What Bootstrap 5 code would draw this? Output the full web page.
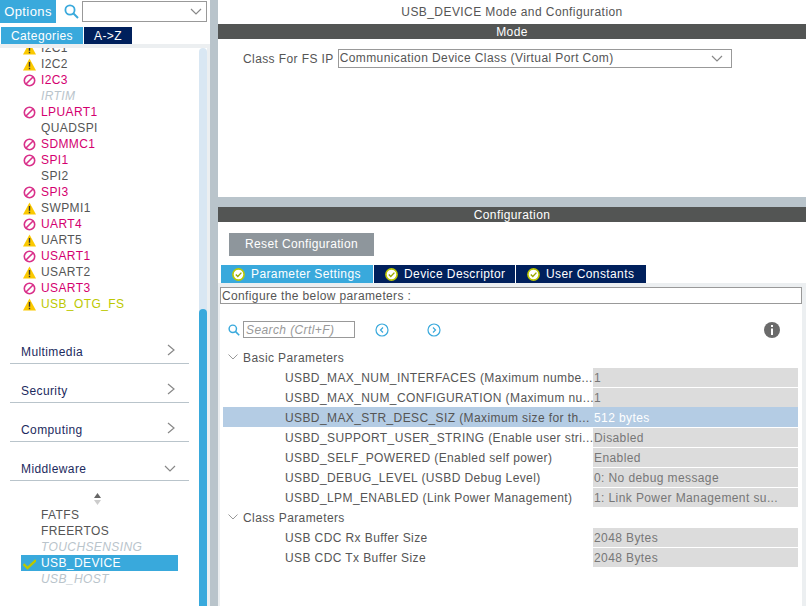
<!DOCTYPE html>
<html lang="en"><head><meta charset="utf-8"><title>USB_DEVICE Mode and Configuration</title>
<link href="https://cdn.jsdelivr.net/npm/bootstrap@5.3.0/dist/css/bootstrap.min.css" rel="stylesheet">
<style>
html,body{height:606px;overflow:hidden}
body{font:12px/16px "Liberation Sans",Arial,sans-serif;letter-spacing:.4px;color:#555;background:#b9c4cb}
.shell{width:806px;height:606px}
.side{width:210px;background:#fff}
.split{width:8px}
.main{width:588px}
.sidetop{height:44px}
.opt{width:56px;height:23px;background:#39a9dc;color:#fff;font-size:13px;line-height:24px;text-align:center}
.findbox{width:125px;height:21px;border:1px solid #999;margin-left:3px;margin-top:1px}
.tabrow{padding:4px 0 0 1px;height:21px}
.cat{width:82px;height:17px;background:#39a9dc;color:#fff;line-height:18px;text-align:center}
.az{width:48px;height:17px;background:#00205c;color:#fff;line-height:18px;text-align:center;margin-left:1px}
.sidebody{height:562px}
.sideleft{width:199px}
.listclip{height:264px;overflow:hidden}
.listin{margin-top:-8px}
.prow{height:16px;padding-left:23px;gap:5px;white-space:nowrap}
.prow svg,.ic-blank{width:13px;height:13px;flex:none}
.tm{color:#d4006f}.to{color:#bcc800}.td{color:#b9c4cb;font-style:italic}
.sect{height:39px;margin:0 10px 0 10px;border-bottom:1px solid #b9c4cb;color:#1c2a5e;padding:0 11px 3px;width:179px}
.sect svg{margin-right:2px}
.sorter{height:17px;margin-top:9px;padding-left:93px}
.sel{background:#39a9dc;color:#fff;width:157px;margin-left:21px;padding-left:2px}
.sbar{width:8px;background:#d9e7f3;border-radius:4px 4px 0 0;height:558px}
.sthumb{height:297px;background:#39a9dc;border-radius:4px 4px 0 0}
.sgut{width:3px;background:#eceff1}
.pane{background:#fff;height:197px}
.pane2{background:#fff;height:399px;margin-top:10px}
.ttl{height:24px;line-height:24px;text-align:center;letter-spacing:.42px}
.band{height:15px;background:#535554;color:#fff;line-height:16px;text-align:center}
.formrow{padding:10px 0 0 25px;gap:4px}
.combo{width:394px;height:19px;border:1px solid #999;padding-left:1px;line-height:17px}
.rst{background:#8e969c;color:#fff;border:0;border-radius:0;width:145px;height:23px;padding:0;margin:11px 0 0 11px;font:12px/23px "Liberation Sans",sans-serif;letter-spacing:.36px}
.tabs{margin:9px 0 0 3px;height:18px;gap:1px}
.tb{height:18px;line-height:19px;color:#fff;background:#00205c;gap:6px;padding-left:11px}
.tb1{width:152px;background:#39a9dc}.tb2{width:141px}.tb3{width:130px}
.tabbody{background:#eceff1;padding:4px 4px 0 2px}
.cfg{height:17px;border:1px solid #999;background:#fff;line-height:16px;padding-left:1px;letter-spacing:.37px}
.workarea{background:#fff;height:302px}
.tools{height:43px;padding:8px 0 0 8px}
.srch{width:112px;height:17px;border:1px solid #999;margin-left:3px;color:#999;font-style:italic;line-height:16px;padding-left:2px}
.circ1{margin-left:20px}.circ2{margin-left:38px}.inf{margin-left:323px}
.grp{height:20px;padding-left:5px;gap:5px;margin-left:3px}
.grp span{padding-top:1px}
.ln{height:20px;margin:0 4px 0 3px;padding-left:62px;white-space:nowrap}
.ln.pick{background:#b4cce4}
.nm{width:308px;flex:none;overflow:hidden;padding-top:1px}
.vl{width:205px;flex:none;height:19px;background:#dcdcdc;color:#777;line-height:20px;padding-left:1px;overflow:hidden}
.pick .vl{background:#b4cce4;color:#fff}
</style></head><body>
<svg width="0" height="0" class="d-none" aria-hidden="true"><defs>
<symbol id="warn" viewBox="0 0 13 13"><path d="M6.5.4 13 12.6H0Z" fill="#fbc900"/><path d="M5.8 4h1.4v4.8H5.8ZM5.8 9.8h1.4v1.4H5.8Z" fill="#333"/></symbol>
<symbol id="stop" viewBox="0 0 13 13"><circle cx="6.5" cy="6.5" r="5.2" fill="none" stroke="#d9308a" stroke-width="1.6"/><path d="M3 10 10 3" stroke="#d9308a" stroke-width="1.6"/></symbol>
<symbol id="lens" viewBox="0 0 15 15"><circle cx="6" cy="6" r="4.6" fill="none" stroke="#39a9dc" stroke-width="1.8"/><path d="M9.5 9.5 14 14" stroke="#39a9dc" stroke-width="2"/></symbol>
<symbol id="okc" viewBox="0 0 13 13"><circle cx="6.5" cy="6.5" r="5.6" fill="#fff" stroke="#bcc800" stroke-width="1.6"/><path d="M3.8 6.5 5.8 8.5 9.4 4.6" fill="none" stroke="#9aa800" stroke-width="1.4"/></symbol>
</defs></svg>
<div class="shell d-flex">
 <aside class="side d-flex flex-column">
  <div class="sidetop">
   <div class="d-flex align-items-start">
    <div class="opt">Options</div>
    <svg class="ms-2 mt-1" width="15" height="15"><use href="#lens"/></svg>
    <div class="findbox d-flex justify-content-end align-items-center pe-1"><svg width="12" height="7" viewBox="0 0 12 7"><path d="M1 1 6 6 11 1" fill="none" stroke="#888" stroke-width="1.2"/></svg></div>
   </div>
   <div class="tabrow d-flex"><div class="cat">Categories</div><div class="az">A-&gt;Z</div></div>
  </div>
  <div class="sidebody d-flex" style="border-top:4px solid #eceff1">
   <div class="sideleft">
    <div class="listclip"><div class="listin">
     <div class="prow d-flex align-items-center"><svg><use href="#warn"/></svg><span>I2C1</span></div>
     <div class="prow d-flex align-items-center"><svg><use href="#warn"/></svg><span>I2C2</span></div>
     <div class="prow d-flex align-items-center tm"><svg><use href="#stop"/></svg><span>I2C3</span></div>
     <div class="prow d-flex align-items-center td"><i class="ic-blank"></i><span>IRTIM</span></div>
     <div class="prow d-flex align-items-center tm"><svg><use href="#stop"/></svg><span>LPUART1</span></div>
     <div class="prow d-flex align-items-center"><i class="ic-blank"></i><span>QUADSPI</span></div>
     <div class="prow d-flex align-items-center tm"><svg><use href="#stop"/></svg><span>SDMMC1</span></div>
     <div class="prow d-flex align-items-center tm"><svg><use href="#stop"/></svg><span>SPI1</span></div>
     <div class="prow d-flex align-items-center"><i class="ic-blank"></i><span>SPI2</span></div>
     <div class="prow d-flex align-items-center tm"><svg><use href="#stop"/></svg><span>SPI3</span></div>
     <div class="prow d-flex align-items-center"><svg><use href="#warn"/></svg><span>SWPMI1</span></div>
     <div class="prow d-flex align-items-center tm"><svg><use href="#stop"/></svg><span>UART4</span></div>
     <div class="prow d-flex align-items-center"><svg><use href="#warn"/></svg><span>UART5</span></div>
     <div class="prow d-flex align-items-center tm"><svg><use href="#stop"/></svg><span>USART1</span></div>
     <div class="prow d-flex align-items-center"><svg><use href="#warn"/></svg><span>USART2</span></div>
     <div class="prow d-flex align-items-center tm"><svg><use href="#stop"/></svg><span>USART3</span></div>
     <div class="prow d-flex align-items-center to"><svg><use href="#warn"/></svg><span>USB_OTG_FS</span></div>
    </div></div>
    <div class="sect d-flex justify-content-between align-items-end" style="height:52px"><span>Multimedia</span><svg class="mb-1" width="9" height="12" viewBox="0 0 9 12"><path d="M1 1 7 6 1 11" fill="none" stroke="#888" stroke-width="1.2"/></svg></div>
    <div class="sect d-flex justify-content-between align-items-end"><span>Security</span><svg class="mb-1" width="9" height="12" viewBox="0 0 9 12"><path d="M1 1 7 6 1 11" fill="none" stroke="#888" stroke-width="1.2"/></svg></div>
    <div class="sect d-flex justify-content-between align-items-end"><span>Computing</span><svg class="mb-1" width="9" height="12" viewBox="0 0 9 12"><path d="M1 1 7 6 1 11" fill="none" stroke="#888" stroke-width="1.2"/></svg></div>
    <div class="sect d-flex justify-content-between align-items-end"><span>Middleware</span><svg class="mb-1" width="12" height="8" viewBox="0 0 12 8"><path d="M1 1 6 6 11 1" fill="none" stroke="#888" stroke-width="1.2"/></svg></div>
    <div class="sorter"><svg width="9" height="12" viewBox="0 0 9 12"><path d="M4.5 0 8 5H1Z" fill="#666"/><path d="M4.5 12 8 7H1Z" fill="#ccc"/></svg></div>
    <div>
     <div class="prow d-flex align-items-center"><i class="ic-blank"></i><span>FATFS</span></div>
     <div class="prow d-flex align-items-center"><i class="ic-blank"></i><span>FREERTOS</span></div>
     <div class="prow d-flex align-items-center td"><i class="ic-blank"></i><span>TOUCHSENSING</span></div>
     <div class="prow sel d-flex align-items-center"><svg viewBox="0 0 13 13"><path d="M.5 7 4.5 11 13 3" fill="none" stroke="#bcc800" stroke-width="2.4"/></svg><span>USB_DEVICE</span></div>
     <div class="prow d-flex align-items-center td"><i class="ic-blank"></i><span>USB_HOST</span></div>
    </div>
   </div>
   <div class="sbar d-flex flex-column justify-content-end"><div class="sthumb"></div></div>
   <div class="sgut"></div>
  </div>
 </aside>
 <div class="split"></div>
 <main class="main">
  <section class="pane">
   <div class="ttl">USB_DEVICE Mode and Configuration</div>
   <div class="band">Mode</div>
   <div class="formrow d-flex align-items-center">
    <span>Class For FS IP</span>
    <div class="combo d-flex justify-content-between align-items-center pe-2"><span>Communication Device Class (Virtual Port Com)</span><svg width="12" height="7" viewBox="0 0 12 7"><path d="M1 1 6 6 11 1" fill="none" stroke="#888" stroke-width="1.2"/></svg></div>
   </div>
  </section>
  <section class="pane2">
   <div class="band">Configuration</div>
   <button type="button" class="btn rst">Reset Configuration</button>
   <div class="tabs d-flex">
    <div class="tb tb1 d-flex align-items-center"><svg width="13" height="13"><use href="#okc"/></svg><span>Parameter Settings</span></div>
    <div class="tb tb2 d-flex align-items-center"><svg width="13" height="13"><use href="#okc"/></svg><span>Device Descriptor</span></div>
    <div class="tb tb3 d-flex align-items-center"><svg width="13" height="13"><use href="#okc"/></svg><span>User Constants</span></div>
   </div>
   <div class="tabbody">
    <div class="cfg">Configure the below parameters :</div>
    <div class="workarea">
     <div class="tools d-flex align-items-center">
      <svg width="12" height="12" viewBox="0 0 15 15"><use href="#lens"/></svg>
      <div class="srch">Search (Crtl+F)</div>
      <svg class="circ1" width="14" height="14" viewBox="0 0 14 14"><circle cx="7" cy="7" r="6" fill="none" stroke="#39a9dc" stroke-width="1.2"/><path d="M8 4.5 5.5 7 8 9.5" fill="none" stroke="#39a9dc" stroke-width="1.2"/></svg>
      <svg class="circ2" width="14" height="14" viewBox="0 0 14 14"><circle cx="7" cy="7" r="6" fill="none" stroke="#39a9dc" stroke-width="1.2"/><path d="M6 4.5 8.5 7 6 9.5" fill="none" stroke="#39a9dc" stroke-width="1.2"/></svg>
      <svg class="inf" width="16" height="16" viewBox="0 0 16 16"><circle cx="8" cy="8" r="8" fill="#6b6b6b"/><path d="M7 3h2v2H7ZM7 6.5h2V13H7Z" fill="#fff"/></svg>
     </div>
     <div class="grp d-flex align-items-center"><svg width="10" height="6" viewBox="0 0 10 6"><path d="M.5.5 5 5 9.5.5" fill="none" stroke="#999"/></svg><span>Basic Parameters</span></div>
     <div class="ln d-flex align-items-center"><div class="nm">USBD_MAX_NUM_INTERFACES (Maximum numbe...</div><div class="vl">1</div></div>
     <div class="ln d-flex align-items-center"><div class="nm">USBD_MAX_NUM_CONFIGURATION (Maximum nu...</div><div class="vl">1</div></div>
     <div class="ln pick d-flex align-items-center"><div class="nm">USBD_MAX_STR_DESC_SIZ (Maximum size for th...</div><div class="vl">512 bytes</div></div>
     <div class="ln d-flex align-items-center"><div class="nm">USBD_SUPPORT_USER_STRING (Enable user stri...</div><div class="vl">Disabled</div></div>
     <div class="ln d-flex align-items-center"><div class="nm">USBD_SELF_POWERED (Enabled self power)</div><div class="vl">Enabled</div></div>
     <div class="ln d-flex align-items-center"><div class="nm">USBD_DEBUG_LEVEL (USBD Debug Level)</div><div class="vl">0: No debug message</div></div>
     <div class="ln d-flex align-items-center"><div class="nm">USBD_LPM_ENABLED (Link Power Management)</div><div class="vl">1: Link Power Management su...</div></div>
     <div class="grp d-flex align-items-center"><svg width="10" height="6" viewBox="0 0 10 6"><path d="M.5.5 5 5 9.5.5" fill="none" stroke="#999"/></svg><span>Class Parameters</span></div>
     <div class="ln d-flex align-items-center"><div class="nm">USB CDC Rx Buffer Size</div><div class="vl">2048 Bytes</div></div>
     <div class="ln d-flex align-items-center"><div class="nm">USB CDC Tx Buffer Size</div><div class="vl">2048 Bytes</div></div>
    </div>
   </div>
  </section>
 </main>
</div>
<script src="https://cdn.jsdelivr.net/npm/bootstrap@5.3.0/dist/js/bootstrap.bundle.min.js"></script>
</body></html>
